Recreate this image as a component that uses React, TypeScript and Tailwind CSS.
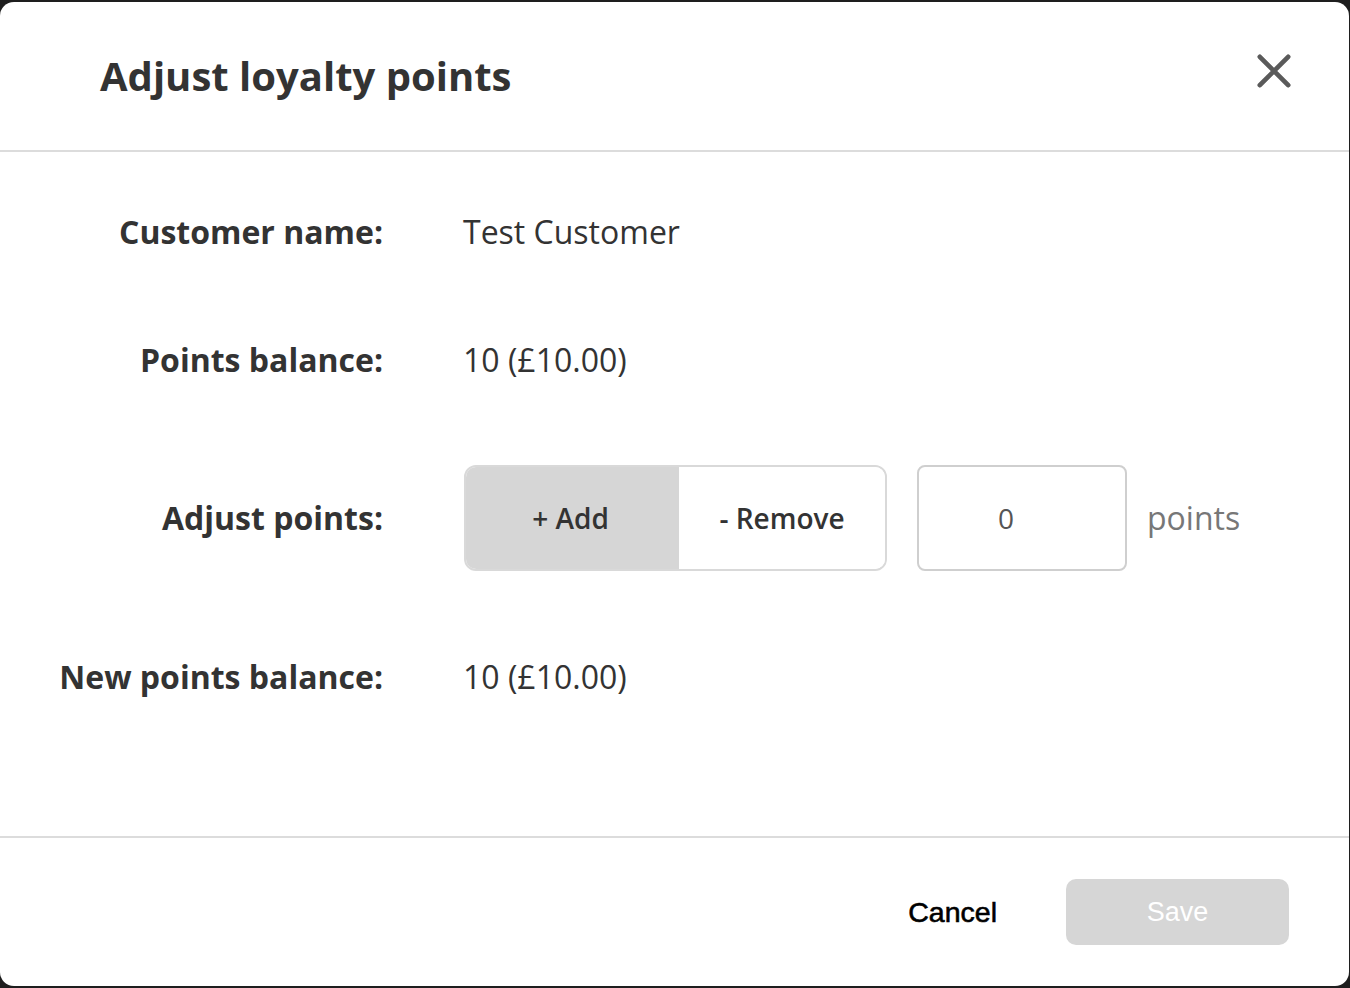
const openSans = { fontFamily: '"Open Sans", "Noto Sans", sans-serif' };

function Row({ label, children, className }: { label: string; children: React.ReactNode; className: string }) {
  return (
    <div className={`flex items-center ${className}`}>
      <div className="w-[383px] shrink-0 text-right text-[32px] font-bold text-[#333]">{label}</div>
      <div className="ml-[80px] flex items-center">{children}</div>
    </div>
  );
}

export default function App() {
  return (
    <div className="h-[988px] w-[1350px] overflow-hidden bg-[#1e1e1e] pt-[2px]" style={openSans}>
      <div className="flex h-[984px] w-[1349px] flex-col overflow-hidden rounded-[14px] bg-white">
        <div className="flex h-[150px] shrink-0 items-center justify-between border-b-2 border-[#dcdcdc] pl-[100px] pr-[58px]">
          <h1 className="text-[40px] font-bold text-[#333]">Adjust loyalty points</h1>
          <button className="mb-[11px] flex h-[34px] w-[34px] items-center justify-center text-[#5a5a5a]">
            <svg width="36" height="36" viewBox="0 0 36 36" fill="none" stroke="currentColor" strokeWidth="5" strokeLinecap="round">
              <path d="M3 3 L33 33 M33 3 L3 33" />
            </svg>
          </button>
        </div>

        <div className="flex-1">
          <Row label="Customer name:" className="mt-[48px] h-[64px]">
            <span className="text-[32px] text-[#333]">Test Customer</span>
          </Row>
          <Row label="Points balance:" className="mt-[64px] h-[64px]">
            <span className="text-[32px] text-[#333]">10 (£10.00)</span>
          </Row>
          <Row label="Adjust points:" className="mt-[73px] h-[106px]">
            <div className="ml-px flex h-[106px] w-[423px] overflow-hidden rounded-[12px] border-2 border-[#d9d9d9]">
              <button className="flex h-full w-[213px] items-center justify-center bg-[#d6d6d6] pr-[4px] text-[28px] font-semibold text-[#333]">
                + Add
              </button>
              <button className="flex h-full flex-1 items-center justify-center bg-white text-[28px] font-semibold text-[#333]">
                - Remove
              </button>
            </div>
            <div className="ml-[30px] flex h-[106px] w-[210px] items-center justify-center rounded-[8px] border-2 border-[#cfcfcf] pr-[32px] text-[28px] text-[#555]">
              0
            </div>
            <span className="ml-[20px] text-[32px] text-[#777]">points</span>
          </Row>
          <Row label="New points balance:" className="mt-[74px] h-[64px]">
            <span className="text-[32px] text-[#333]">10 (£10.00)</span>
          </Row>
        </div>

        <div
          className="flex h-[150px] shrink-0 items-center justify-end border-t-2 border-[#dcdcdc] pr-[60px]"
          style={{ fontFamily: '"Liberation Sans", Arial, sans-serif' }}
        >
          <button className="mr-[69px] text-[28.5px] text-black [-webkit-text-stroke:0.6px_black]">Cancel</button>
          <button className="h-[66px] w-[223px] rounded-[10px] bg-[#d6d6d6] text-[27px] text-white">Save</button>
        </div>
      </div>
    </div>
  );
}
